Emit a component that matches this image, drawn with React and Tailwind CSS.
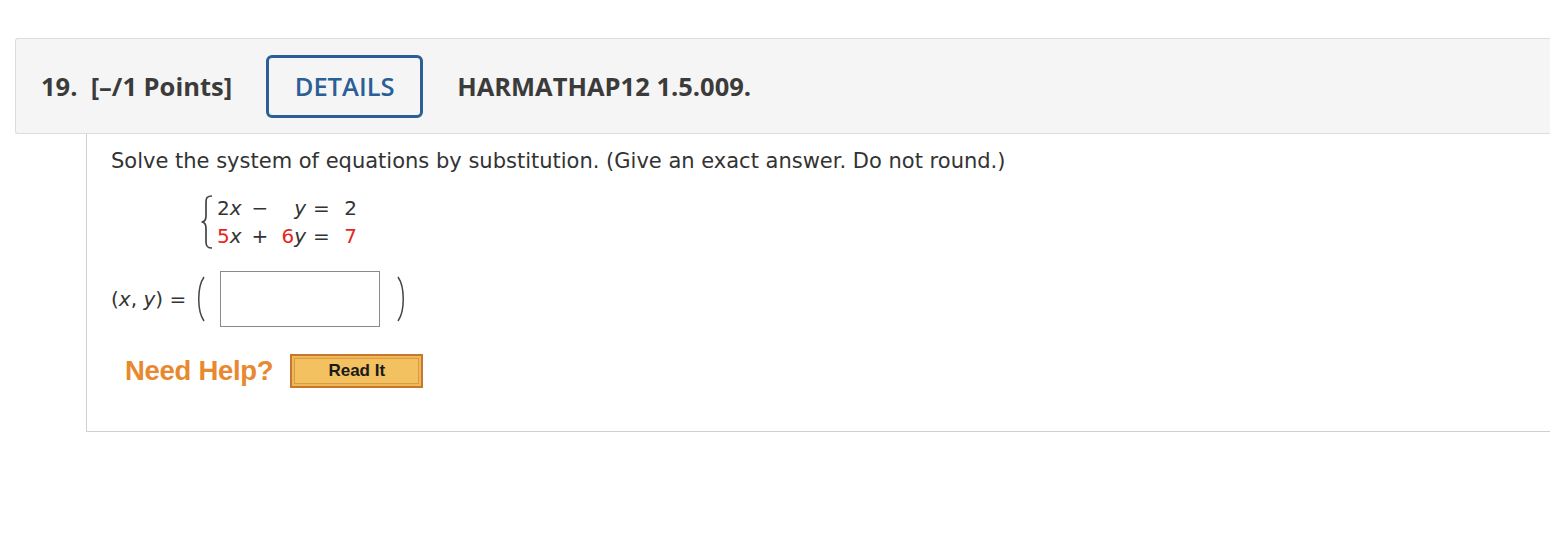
const Brace = () => (
  <svg width="14" height="56" viewBox="0 0 14 56" className="shrink-0">
    <path
      d="M12 2 C7 2 6 4 6 8 L6 22 C6 26 4 28 1.5 28 C4 28 6 30 6 34 L6 48 C6 52 7 54 12 54"
      fill="none"
      stroke="#444"
      strokeWidth="1.7"
    />
  </svg>
);

const Paren = ({ right }) => (
  <svg width="12" height="48" viewBox="0 0 12 48" className="shrink-0">
    <path
      d={right ? "M3 2 C10 12 10 36 3 46" : "M9 2 C2 12 2 36 9 46"}
      fill="none"
      stroke="#444"
      strokeWidth="1.5"
    />
  </svg>
);

const App = () => {
  return (
    <div className="w-[1550px] h-[542px] bg-white overflow-hidden pt-[38px]">
      <div className="ml-[15px] h-[96px] bg-[#f5f5f5] border border-r-0 border-[#dcdcdc] rounded-tl-[3px] rounded-bl-[3px] flex items-center pl-[25px] font-['Open_Sans',sans-serif] font-bold text-[25.5px] text-[#3b3b3b]">
        <span>19.&nbsp; [–/1 Points]</span>
        <div className="ml-[34px] w-[157px] h-[63px] border-[3px] border-[#2b5f95] rounded-[6px] flex items-center justify-center text-[#2b5f95] font-semibold">
          DETAILS
        </div>
        <span className="ml-[34px]">HARMATHAP12 1.5.009.</span>
      </div>

      <div className="ml-[86px] h-[298px] border-l border-b border-[#d0d0d0] pl-[24px] pt-[14px] font-['DejaVu_Sans',Verdana,sans-serif] text-[#333]">
        <p className="text-[21px] leading-[26px]">
          Solve the system of equations by substitution. (Give an exact answer. Do not round.)
        </p>

        <div className="flex items-center ml-[89px] mt-[20px]">
          <Brace />
          <div className="grid grid-cols-[28px_30px_31px_31px_20px] text-[20px] leading-[28px] ml-[3px]">
            <span>2<i>x</i></span>
            <span className="text-center">−</span>
            <span className="text-right"><i>y</i></span>
            <span className="text-center">=</span>
            <span className="text-right">2</span>
            <span><span className="text-[#e5261c]">5</span><i>x</i></span>
            <span className="text-center">+</span>
            <span className="text-right"><span className="text-[#e5261c]">6</span><i>y</i></span>
            <span className="text-center">=</span>
            <span className="text-right text-[#e5261c]">7</span>
          </div>
        </div>

        <div className="flex items-center mt-[21px]">
          <span className="text-[20px]">(<i>x</i>, <i>y</i>) =</span>
          <div className="ml-[9px]">
            <Paren />
          </div>
          <div className="ml-[13px] w-[160px] h-[56px] border border-[#8a8a8a] bg-white"></div>
          <div className="ml-[15px]">
            <Paren right />
          </div>
        </div>

        <div className="flex items-center mt-[23px] ml-[14px]">
          <span className="font-['Liberation_Sans',Arial,sans-serif] font-bold text-[27.5px] text-[#e8892f] tracking-[-0.3px]">
            Need Help?
          </span>
          <div className="ml-[17px] w-[133px] h-[34px] border-2 border-[#c8782c] bg-[#f0b857] p-[2px]">
            <div className="w-full h-full border border-[#d99a45] bg-[#f3c160] flex items-center justify-center font-['Liberation_Sans',Arial,sans-serif] font-bold text-[17px] text-[#1a1a1a]">
              Read It
            </div>
          </div>
        </div>
      </div>
    </div>
  );
};

export default App;
